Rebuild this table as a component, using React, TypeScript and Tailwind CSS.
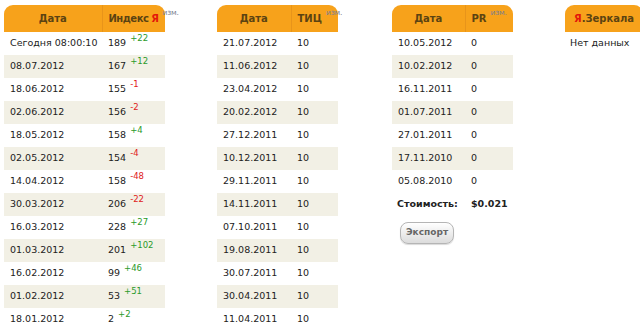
import React from "react";

type Row = { date: string; value: string; delta?: string };

const font = { fontFamily: '"DejaVu Sans", Verdana, sans-serif' };

const indexRows: Row[] = [
  { date: "Сегодня 08:00:10", value: "189", delta: "+22" },
  { date: "08.07.2012", value: "167", delta: "+12" },
  { date: "18.06.2012", value: "155", delta: "-1" },
  { date: "02.06.2012", value: "156", delta: "-2" },
  { date: "18.05.2012", value: "158", delta: "+4" },
  { date: "02.05.2012", value: "154", delta: "-4" },
  { date: "14.04.2012", value: "158", delta: "-48" },
  { date: "30.03.2012", value: "206", delta: "-22" },
  { date: "16.03.2012", value: "228", delta: "+27" },
  { date: "01.03.2012", value: "201", delta: "+102" },
  { date: "16.02.2012", value: "99", delta: "+46" },
  { date: "01.02.2012", value: "53", delta: "+51" },
  { date: "18.01.2012", value: "2", delta: "+2" },
];

const ticRows: Row[] = [
  "21.07.2012", "11.06.2012", "23.04.2012", "20.02.2012", "27.12.2011", "10.12.2011", "29.11.2011",
  "14.11.2011", "07.10.2011", "19.08.2011", "30.07.2011", "30.04.2011", "11.04.2011",
].map((date) => ({ date, value: "10" }));

const prRows: Row[] = [
  "10.05.2012", "10.02.2012", "16.11.2011", "01.07.2011", "27.01.2011", "17.11.2010", "05.08.2010",
].map((date) => ({ date, value: "0" }));

function Head({ children, left }: { children: React.ReactNode; left?: boolean }) {
  return (
    <th
      className={`h-[27px] bg-[#f7a21b] font-bold text-[10px] text-[#5b4312] whitespace-nowrap ${
        left ? "text-center rounded-tl-[9px]" : "text-left pl-[6px] rounded-tr-[9px] border-l border-[#e8941a]"
      }`}
    >
      {children}
    </th>
  );
}

const Izm = () => (
  <sup className="ml-[4px] text-[7.5px] font-normal tracking-[-0.2px] text-[#7a7f90] top-[-0.9em]">изм.</sup>
);

function Rows({ rows }: { rows: Row[] }) {
  return (
    <>
      {rows.map((r, i) => (
        <tr key={i} className={`h-[23px] ${i % 2 === 1 ? "bg-[#f2f0e5]" : ""}`}>
          <td className="pl-[6px] whitespace-nowrap">{r.date}</td>
          <td className="pl-[6px] whitespace-nowrap">
            {r.value}
            {r.delta && (
              <sup
                className={`ml-[4px] text-[8.5px] top-[-0.6em] ${
                  r.delta.startsWith("+") ? "text-[#2a9a2a]" : "text-[#e02020]"
                }`}
              >
                {r.delta}
              </sup>
            )}
          </td>
        </tr>
      ))}
    </>
  );
}

export default function App() {
  return (
    <div className="w-[640px] h-[335px] overflow-hidden bg-white text-[9.5px] text-[#222]" style={font}>
      <div className="flex items-start pt-[5px] pl-[4px]">
        {/* Индекс Я */}
        <table className="table-fixed border-collapse w-[161px]">
          <colgroup>
            <col className="w-[98px]" />
            <col className="w-[63px]" />
          </colgroup>
          <thead>
            <tr>
              <Head left>Дата</Head>
              <Head>
                <span className="tracking-[-0.5px]">
                  Индекс <span className="text-[#e3170a]">Я</span>
                </span>
                <Izm />
              </Head>
            </tr>
          </thead>
          <tbody>
            <Rows rows={indexRows} />
          </tbody>
        </table>

        {/* ТИЦ */}
        <table className="table-fixed border-collapse w-[121px] ml-[52px]">
          <colgroup>
            <col className="w-[74px]" />
            <col className="w-[47px]" />
          </colgroup>
          <thead>
            <tr>
              <Head left>Дата</Head>
              <Head>
                ТИЦ
                <Izm />
              </Head>
            </tr>
          </thead>
          <tbody>
            <Rows rows={ticRows} />
          </tbody>
        </table>

        {/* PR */}
        <div className="ml-[54px] w-[121px]">
          <table className="table-fixed border-collapse w-[121px]">
            <colgroup>
              <col className="w-[73px]" />
              <col className="w-[48px]" />
            </colgroup>
            <thead>
              <tr>
                <Head left>Дата</Head>
                <Head>
                  PR
                  <Izm />
                </Head>
              </tr>
            </thead>
            <tbody>
              <Rows rows={prRows} />
              <tr className="h-[23px] font-bold">
                <td className="pl-[5px] whitespace-nowrap">Стоимость:</td>
                <td className="pl-[6px]">$0.021</td>
              </tr>
            </tbody>
          </table>
          <button className="mt-[6px] ml-[8px] h-[22px] px-[5px] rounded-[8px] border border-[#b5b5b5] bg-gradient-to-b from-white to-[#dcdcdc] text-[9px] font-bold text-[#666] shadow-[0_1px_1px_rgba(0,0,0,0.15)]">
            Экспорт
          </button>
        </div>

        {/* Зеркала */}
        <table className="border-collapse w-[78px] ml-[52px] shrink-0">
          <thead>
            <tr>
              <th className="h-[27px] bg-[#f7a21b] font-bold text-[10px] text-[#5b4312] text-center rounded-t-[9px] whitespace-nowrap">
                <span className="text-[#e3170a]">Я</span>.Зеркала
              </th>
            </tr>
          </thead>
          <tbody>
            <tr className="h-[23px]">
              <td className="pl-[5px] whitespace-nowrap">Нет данных</td>
            </tr>
          </tbody>
        </table>
      </div>
    </div>
  );
}
